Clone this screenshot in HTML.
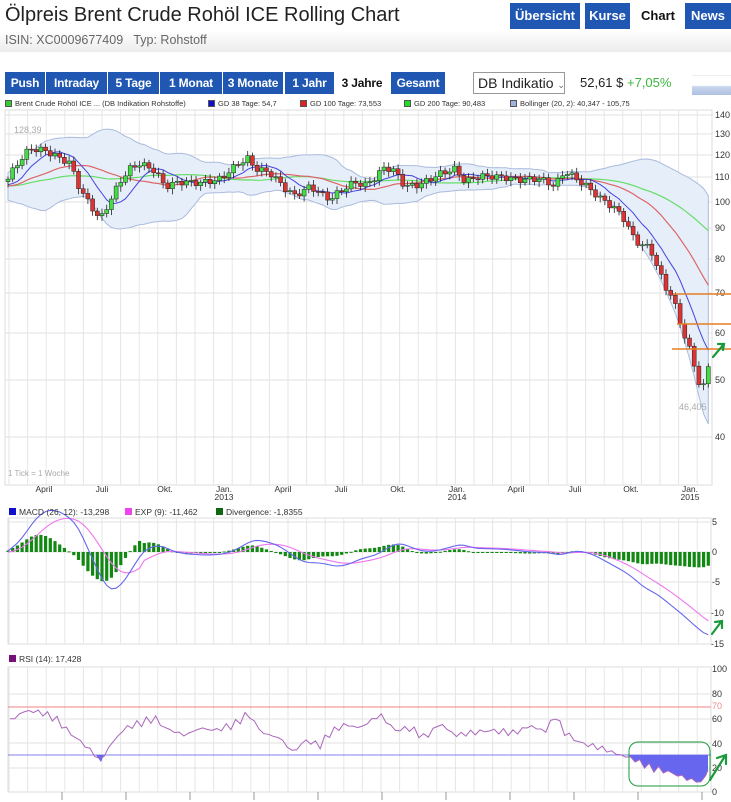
<!DOCTYPE html>
<html><head><meta charset="utf-8">
<style>
*{margin:0;padding:0;box-sizing:border-box}
body{width:731px;height:802px;overflow:hidden;background:#fff;font-family:"Liberation Sans",sans-serif;position:relative}
.a{position:absolute;white-space:nowrap}
.btn{position:absolute;background:#1f57b3;color:#fff;font-weight:bold;font-size:13px;text-align:center;line-height:24px;height:24px;font-family:"Liberation Sans Narrow","Liberation Sans",sans-serif}
.tab{position:absolute;top:72px;height:22px;line-height:22px;background:#1f57b3;color:#fff;font-weight:bold;font-size:12px;text-align:center;font-family:"Liberation Sans Narrow","Liberation Sans",sans-serif;letter-spacing:-0.2px}
.lg{position:absolute;top:99px;font-size:7.5px;color:#333}
.sq{display:inline-block;width:7px;height:7px;border:1px solid #555;margin-right:3px;vertical-align:-1px}
</style></head><body>
<div class="a" style="left:5px;top:4px;font-size:20px;color:#222">Ölpreis Brent Crude Rohöl ICE Rolling Chart</div>
<div class="btn" style="left:510px;top:3px;width:70px;height:26px;line-height:26px">Übersicht</div>
<div class="btn" style="left:585px;top:3px;width:45px;height:26px;line-height:26px">Kurse</div>
<div class="btn" style="left:634px;top:3px;width:48px;height:26px;line-height:26px;background:#fff;color:#111">Chart</div>
<div class="btn" style="left:685px;top:3px;width:46px;height:26px;line-height:26px">News</div>
<div class="a" style="left:0;top:30px;width:731px;height:22px;background:linear-gradient(#fff,#ececec)"></div>
<div class="a" style="left:5px;top:33px;font-size:12.5px;color:#666">ISIN: XC0009677409&nbsp;&nbsp; Typ: Rohstoff</div>
<div class="tab" style="left:5px;width:40px">Push</div>
<div class="tab" style="left:46px;width:61px">Intraday</div>
<div class="tab" style="left:108px;width:51px">5 Tage</div>
<div class="tab" style="left:160px;width:62px">1 Monat</div>
<div class="tab" style="left:223px;width:60px">3 Monate</div>
<div class="tab" style="left:285px;width:49px">1 Jahr</div>
<div class="tab" style="left:335px;width:54px;background:#fff;color:#111">3 Jahre</div>
<div class="tab" style="left:391px;width:54px">Gesamt</div>
<div class="a" style="left:473px;top:72px;width:92px;height:22px;border:1px solid #999;font-size:14px;line-height:20px;padding-left:4px;color:#222">DB Indikatio <span style="font-size:9px;color:#666">&#8964;</span></div>
<div class="a" style="left:580px;top:75px;font-size:13px;color:#222">52,61 $ <span style="color:#3bb83b">+7,05%</span></div>
<div class="a" style="left:692px;top:75px;width:39px;height:20px;background:linear-gradient(#fff 50%,#c9d7ee 55%,#aebfe0);border-top:1px solid #eee"></div>
<div class="lg" style="left:5px"><span class="sq" style="background:#33cc33"></span>Brent Crude Rohöl ICE ... (DB Indikation Rohstoffe)</div>
<div class="lg" style="left:208px"><span class="sq" style="background:#1010cc"></span>GD 38 Tage: 54,7</div>
<div class="lg" style="left:300px"><span class="sq" style="background:#dd2222"></span>GD 100 Tage: 73,553</div>
<div class="lg" style="left:404px"><span class="sq" style="background:#22dd22"></span>GD 200 Tage: 90,483</div>
<div class="lg" style="left:510px"><span class="sq" style="background:#9fb3dd"></span>Bollinger (20, 2): 40,347 - 105,75</div>

<svg id="s" class="a" style="left:0;top:0" width="731" height="802" xmlns="http://www.w3.org/2000/svg" font-family="Liberation Sans,sans-serif">
<g id="grid"></g>
<g id="main"></g>
<g font-size="9" fill="#333">
<text x="715" y="118">140</text><text x="715" y="137">130</text><text x="715" y="158">120</text><text x="715" y="180">110</text><text x="715" y="205">100</text><text x="715" y="231">90</text><text x="715" y="262">80</text><text x="715" y="296">70</text><text x="715" y="336">60</text><text x="715" y="383">50</text><text x="715" y="440">40</text>
<text x="712" y="525">5</text><text x="712" y="555">0</text><text x="712" y="585">-5</text><text x="711" y="616">-10</text><text x="711" y="647">-15</text>
<text x="712" y="672">100</text><text x="712" y="697">80</text><text x="712" y="722">60</text><text x="712" y="747">40</text><text x="712" y="771">20</text><text x="712" y="795">0</text>
<text x="712" y="709" fill="#e88">70</text>
</g>
<g font-size="8.5" fill="#333" text-anchor="middle">
<text x="44" y="492">April</text><text x="102" y="492">Juli</text><text x="165" y="492">Okt.</text><text x="224" y="492">Jan.</text><text x="224" y="500">2013</text><text x="283" y="492">April</text><text x="341" y="492">Juli</text><text x="398" y="492">Okt.</text><text x="457" y="492">Jan.</text><text x="457" y="500">2014</text><text x="516" y="492">April</text><text x="575" y="492">Juli</text><text x="631" y="492">Okt.</text><text x="690" y="492">Jan.</text><text x="690" y="500">2015</text>
</g>
<text x="14" y="133" font-size="9" fill="#aaa">128,39</text>
<text x="679" y="410" font-size="9" fill="#aaa">46,405</text>
<text x="8" y="476" font-size="8" fill="#aaa">1 Tick = 1 Woche</text>
<g font-size="8.5" fill="#333">
<rect x="9" y="508" width="7" height="7" fill="#1010cc"/><text x="19" y="515">MACD (26, 12): -13,298</text>
<rect x="125" y="508" width="7" height="7" fill="#ee44ee"/><text x="135" y="515">EXP (9): -11,462</text>
<rect x="216" y="508" width="7" height="7" fill="#116611"/><text x="226" y="515">Divergence: -1,8355</text>
<rect x="9" y="655" width="7" height="7" fill="#771177"/><text x="19" y="662">RSI (14): 17,428</text>
</g>
<g stroke="#e67e22" stroke-width="1.5"><line x1="673" y1="294" x2="731" y2="294"/><line x1="677" y1="324" x2="731" y2="324"/><line x1="672" y1="349" x2="731" y2="349"/></g>
<g stroke="#1a9a3a" stroke-width="2.2" fill="none" stroke-linecap="round">
<path d="M713 357 L724 344 M718 344 L724 344 L723 350"/>
<path d="M712 634 L721 622 M715 622 L722 621 L722 628"/>
<path d="M710 780 L725 756 M717 758 L726 755 L726 764"/>
</g>
<rect x="629" y="742" width="81" height="44" rx="9" fill="none" stroke="#1a9a3a" stroke-width="1"/>
</svg>
<script>
(function(){
var NS="http://www.w3.org/2000/svg";
function el(p,t,a){var e=document.createElementNS(NS,t);for(var k in a)e.setAttribute(k,a[k]);p.appendChild(e);return e;}
var G=document.getElementById('grid'),M=document.getElementById('main');
[[5,110,707,375],[8,518,703,126],[8,667,703,125]].forEach(function(r){el(G,'rect',{x:r[0],y:r[1],width:r[2],height:r[3],fill:'#fff',stroke:'#ddd'});});
for(var x=9;x<710;x+=18.6){el(G,'line',{x1:x,y1:110,x2:x,y2:485,stroke:'#e6e6e6'});el(G,'line',{x1:x,y1:518,x2:x,y2:644,stroke:'#e6e6e6'});el(G,'line',{x1:x,y1:667,x2:x,y2:792,stroke:'#e6e6e6'});}
[115,134,155,177,202,228,259,293,333,380,437].forEach(function(y){el(G,'line',{x1:5,y1:y,x2:712,y2:y,stroke:'#e2e2e2'});});
[522,552,582,613].forEach(function(y){el(G,'line',{x1:8,y1:y,x2:711,y2:y,stroke:'#e2e2e2'});});
[694,719,743,768].forEach(function(y){el(G,'line',{x1:8,y1:y,x2:711,y2:y,stroke:'#e2e2e2'});});
for(var x=62;x<710;x+=64){el(G,'line',{x1:x,y1:792,x2:x,y2:800,stroke:'#999'});}
el(G,'line',{x1:8,y1:707,x2:711,y2:707,stroke:'#f08080'});
el(G,'line',{x1:8,y1:755,x2:711,y2:755,stroke:'#8080ee'});
function Y(p){return 115+257*(Math.log(140)-Math.log(p));}
var kp=[[8,112],[20,120],[30,125],[45,123],[60,118],[70,115],[80,103],[90,97],[100,91],[110,98],[120,106],[130,112],[140,115],[155,113],[165,107],[180,110],[200,110],[220,111],[240,117],[248,118],[255,113],[270,110],[285,103],[295,100],[310,104],[320,102],[330,100],[340,104],[355,109],[365,108],[375,112],[385,117],[395,115],[405,108],[420,108],[440,111],[455,112],[465,106],[480,108],[500,108],[520,108],[540,110],[555,108],[565,115],[575,112],[585,109],[600,103],[615,98],[625,93],[635,85],[650,82],[665,70],[672,68],[680,61],[690,55],[698,49],[705,48],[709,53]];
function interp(k,x){for(var i=1;i<k.length;i++){if(x<=k[i][0]){var a=k[i-1],b=k[i];return a[1]+(b[1]-a[1])*(x-a[0])/(b[0]-a[0]);}}return k[k.length-1][1];}
var xs=[],c=[];
for(var x=8;x<=709;x+=4.7){xs.push(x);c.push(interp(kp,x)*(1+0.022*Math.sin(x*1.37)+0.012*Math.sin(x*3.1)));}
c[c.length-1]=52.6;
var pad=[];for(var i=0;i<40;i++)pad.push(106+4*Math.sin(i));var all=pad.concat(c);
function sma(n,i){var s=0;for(var j=i-n+1;j<=i;j++)s+=all[j];return s/n;}
function sd(n,i){var m=sma(n,i),s=0;for(var j=i-n+1;j<=i;j++)s+=(all[j]-m)*(all[j]-m);return Math.sqrt(s/n);}
var up=[],lo=[],b=[],r=[],g=[];
for(var i=0;i<c.length;i++){var k=i+40;var m=sma(20,k),d=sd(20,k);up.push([xs[i],Y(m+2*d)]);lo.push([xs[i],Y(Math.max(m-2*d,38))]);b.push([xs[i],Y(sma(8,k))]);r.push([xs[i],Y(sma(20,k))]);g.push([xs[i],Y(sma(40,k))]);}
function pts(a){return a.map(function(p){return p[0].toFixed(1)+','+p[1].toFixed(1);}).join(' ');}
el(M,'polygon',{points:pts(up)+' '+pts(lo.slice().reverse()),fill:'#e6eefa',stroke:'#aabbdd','stroke-width':1});
el(M,'polyline',{points:pts(g),fill:'none',stroke:'#66dd66','stroke-width':1.2});
el(M,'polyline',{points:pts(r),fill:'none',stroke:'#dd6666','stroke-width':1.2});
el(M,'polyline',{points:pts(b),fill:'none',stroke:'#4444dd','stroke-width':1});
for(var i=0;i<c.length;i++){var o=i?c[i-1]:c[0]*0.99,cl=c[i];var hi=Math.max(o,cl)*(1+0.01+0.01*Math.abs(Math.sin(i*2.3))),lw=Math.min(o,cl)*(1-0.01-0.012*Math.abs(Math.cos(i*1.7)));
var x=xs[i];el(M,'line',{x1:x,y1:Y(hi),x2:x,y2:Y(lw),stroke:'#222','stroke-width':0.8});
var y1=Y(Math.max(o,cl)),y2=Y(Math.min(o,cl));el(M,'rect',{x:x-2,y:y1,width:4,height:Math.max(1,y2-y1),fill:cl>=o?'#44dd44':'#dd3333',stroke:'#222','stroke-width':0.5});}
function ema(arr,n){var k=2/(n+1),o=[arr[0]];for(var i=1;i<arr.length;i++)o.push(arr[i]*k+o[i-1]*(1-k));return o;}
var sm=all.map(function(v,i){return i<6?v:(all[i]+all[i-1]+all[i-2])/3;});
var e12=ema(sm,12),e26=ema(sm,26),mac=e12.map(function(v,i){return v-e26[i];}),sig=ema(mac,9);
function MY(v){return 552-6.1*v;}
var mp=[],sp=[];
for(var i=0;i<c.length;i++){var k=i+40;var f=xs[i]<140?1.6:1.05;var mv=mac[k]*f,sv=sig[k]*f;mp.push([xs[i],MY(mv)]);sp.push([xs[i],MY(sv)]);var dv=mv-sv;el(M,'rect',{x:xs[i]-1.6,y:Math.min(552,MY(dv)),width:3.2,height:Math.max(1,Math.abs(6.1*dv)),fill:'#118811'});}
el(M,'polyline',{points:pts(sp),fill:'none',stroke:'#ee77ee','stroke-width':1.1});
el(M,'polyline',{points:pts(mp),fill:'none',stroke:'#6666ee','stroke-width':1.1});
var rk=[[10,58],[25,66],[40,65],[55,60],[70,48],[85,38],[95,30],[101,25],[110,38],[125,52],[140,56],[155,60],[165,52],[185,46],[200,52],[215,50],[235,55],[248,64],[262,48],[280,44],[293,32],[305,42],[320,38],[330,48],[345,55],[360,52],[380,63],[395,50],[410,52],[425,44],[440,56],[455,46],[470,48],[490,50],[515,48],[530,54],[545,49],[555,62],[565,48],[580,40],[600,36],[620,30],[630,28],[650,20],[670,16],[690,10],[703,8],[708,18]];
function RY(v){return 792-1.23*v;}
var rp=[];for(var x=10;x<=708;x+=4.7){var v=interp(rk,x)+2*Math.sin(x*0.7)+1.5*Math.sin(x*1.9);if(x>700)v=interp(rk,x);rp.push([x,RY(v)]);}
rp.push([708,RY(18)]);
var fill=rp.filter(function(p){return p[0]>=628;}).map(function(p){return [p[0],Math.max(p[1],755)];});
el(M,'polygon',{points:'628,755 '+pts(fill)+' 708,755',fill:'#6666ee'});
el(M,'polygon',{points:'96,755 101,762 104,755',fill:'#6666ee'});
el(M,'polyline',{points:pts(rp),fill:'none',stroke:'#aa66bb','stroke-width':1});
})();
</script>
</body></html>
